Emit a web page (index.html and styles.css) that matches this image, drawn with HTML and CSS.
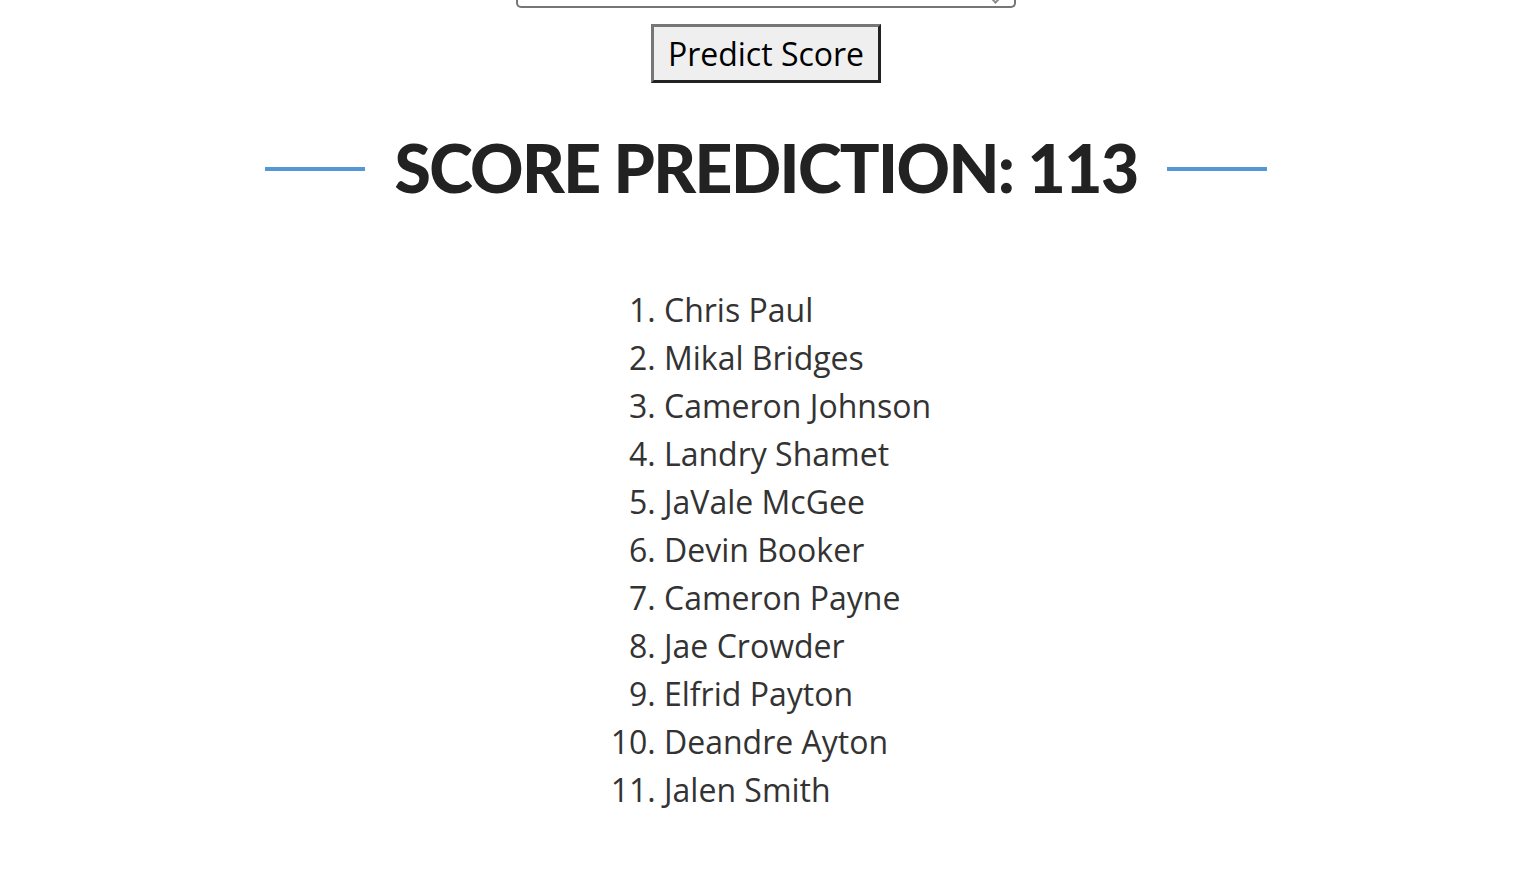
FILE: index.html
```html
<!DOCTYPE html>
<html lang="en">
<head>
<meta charset="utf-8">
<title>Score Prediction</title>
<link rel="stylesheet" href="styles.css">
</head>
<body>
<main class="page">
  <div class="select-stub"><span class="select-arrow"></span></div>
  <button class="predict-btn" type="button">Predict Score</button>
  <div class="result-heading">
    <span class="rule"></span>
    <h1 class="result-title">SCORE PREDICTION: 113</h1>
    <span class="rule"></span>
  </div>
  <ol class="players">
    <li>Chris Paul</li>
    <li>Mikal Bridges</li>
    <li>Cameron Johnson</li>
    <li>Landry Shamet</li>
    <li>JaVale McGee</li>
    <li>Devin Booker</li>
    <li>Cameron Payne</li>
    <li>Jae Crowder</li>
    <li>Elfrid Payton</li>
    <li>Deandre Ayton</li>
    <li>Jalen Smith</li>
  </ol>
</main>
</body>
</html>
```

FILE: styles.css
```css
html, body {
  margin: 0;
  padding: 0;
  background: #fff;
}

.page {
  display: flex;
  flex-direction: column;
  align-items: center;
  padding-left: 8px;
  font-family: "Open Sans", "Liberation Sans", sans-serif;
}

.select-stub {
  position: relative;
  box-sizing: border-box;
  width: 500px;
  height: 8px;
  border: 2px solid #767676;
  border-top: none;
  border-radius: 0 0 5px 5px;
}

.select-arrow {
  position: absolute;
  right: 14px;
  top: -7px;
  width: 7px;
  height: 7px;
  border-right: 2px solid #8a8a8a;
  border-bottom: 2px solid #8a8a8a;
  transform: rotate(45deg);
}

.predict-btn {
  margin-top: 16px;
  font-family: "Open Sans", "Liberation Sans", sans-serif;
  font-size: 32px;
  line-height: 41px;
  color: #000;
  background: #efefef;
  padding: 6px 14px;
  border-width: 3px;
  border-style: solid;
  border-color: #767676 #222 #222 #767676;
  border-radius: 0;
}

.result-heading {
  display: flex;
  align-items: center;
  gap: 29px;
  margin-top: 45px;
}

.rule {
  display: block;
  width: 100px;
  height: 4px;
  margin-top: 2px;
  background: #5596d5;
}

.result-title {
  margin: 0;
  font-family: Lato, "Liberation Sans", sans-serif;
  font-weight: 900;
  font-size: 66px;
  line-height: 80px;
  letter-spacing: -1.6px;
  color: #222;
}

.players {
  margin: 78px 0 0;
  padding-left: 63px;
  font-size: 32px;
  line-height: 48px;
  color: #333;
}
```
